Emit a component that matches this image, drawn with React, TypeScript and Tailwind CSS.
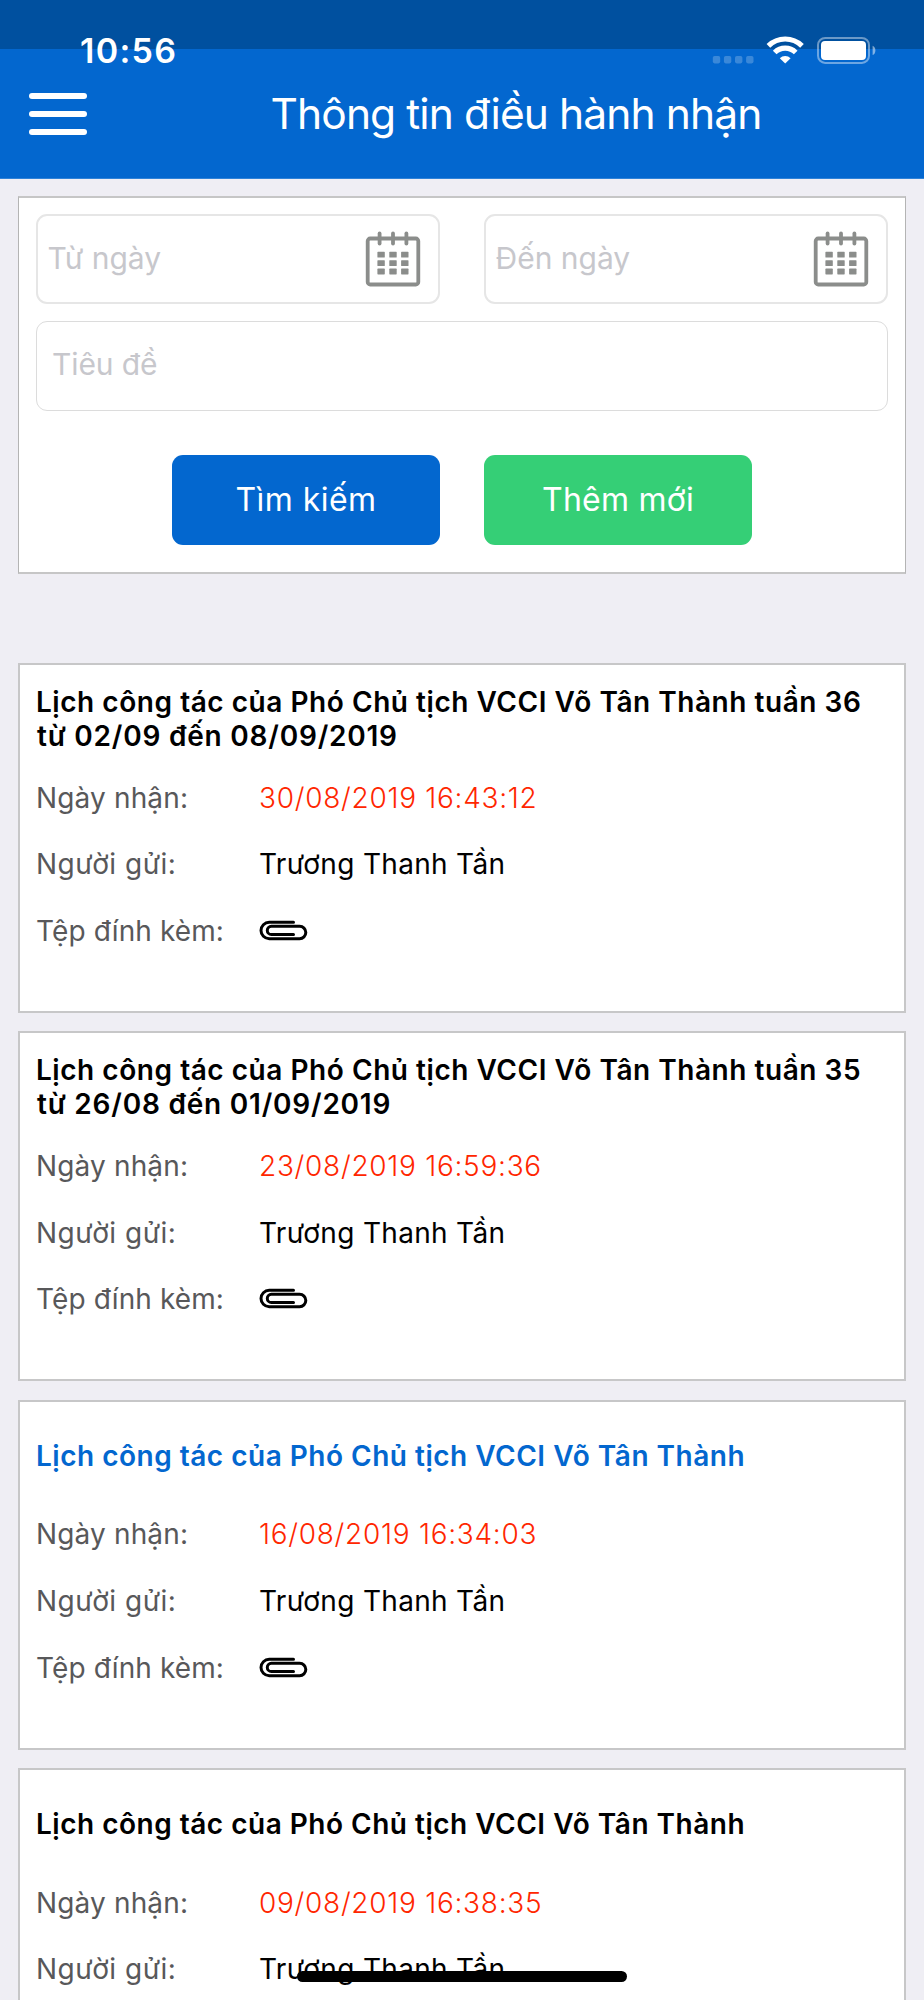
type Item = {
  title: string;
  titleEnd?: string;
  date: string;
  sender: string;
  active?: boolean;
  attachment?: boolean;
};

const items: Item[] = [
  {
    title: "Lịch công tác của Phó Chủ tịch VCCI Võ Tân Thành tuần 36",
    titleEnd: "từ 02/09 đến 08/09/2019",
    date: "30/08/2019 16:43:12",
    sender: "Trương Thanh Tần",
    attachment: true,
  },
  {
    title: "Lịch công tác của Phó Chủ tịch VCCI Võ Tân Thành tuần 35",
    titleEnd: "từ 26/08 đến 01/09/2019",
    date: "23/08/2019 16:59:36",
    sender: "Trương Thanh Tần",
    attachment: true,
  },
  {
    title: "Lịch công tác của Phó Chủ tịch VCCI Võ Tân Thành",
    date: "16/08/2019 16:34:03",
    sender: "Trương Thanh Tần",
    active: true,
    attachment: true,
  },
  {
    title: "Lịch công tác của Phó Chủ tịch VCCI Võ Tân Thành",
    date: "09/08/2019 16:38:35",
    sender: "Trương Thanh Tần",
  },
];

function CalendarIcon() {
  return (
    <svg width="56" height="56" viewBox="0 0 56 56" className="shrink-0">
      <rect x="2.7" y="7.5" width="50.6" height="46" rx="2.5" fill="none" stroke="#8b8d8b" strokeWidth="3.8" />
      {[14.6, 28, 41.4].map((x) => (
        <line key={x} x1={x} x2={x} y1="2.4" y2="12.6" stroke="#8b8d8b" strokeWidth="3.8" strokeLinecap="round" />
      ))}
      {[20.8, 29.2, 37.6].map((y) =>
        [12.4, 24.3, 36.1].map((x) => (
          <rect key={`${x}-${y}`} x={x} y={y} width="7.4" height="5.8" rx="0.6" fill="#8b8d8b" />
        )),
      )}
    </svg>
  );
}

function ClipIcon() {
  return (
    <svg width="50" height="22" viewBox="0 0 50 22" fill="none" stroke="#000" strokeWidth="3" strokeLinecap="round">
      <path d="M34.5 2.3H10.2a8.2 8.2 0 0 0 0 16.4H40.6a6.2 6.2 0 0 0 0-12.4H12.4a4 4 0 0 0 0 8.2H34.5" />
    </svg>
  );
}

function StatusBar() {
  return (
    <div className="flex h-[77px] items-start justify-between bg-[linear-gradient(#00509f_49px,#0367cf_49px)] pl-[80px] pr-[46px]">
      <span className="mt-[31px] text-[34px] font-semibold leading-[40px] tracking-[1.3px] text-white">10:56</span>
      <svg width="166" height="32" viewBox="0 0 166 32" className="mt-[34px]">
        {[0.8, 11.9, 23, 34.1].map((x) => (
          <rect key={x} x={x} y="22" width="7.4" height="7.4" rx="1.8" fill="#fff" fillOpacity="0.22" />
        ))}
        <g fill="none" stroke="#fff" strokeWidth="5.2">
          <path d="M56.4 11.8a24.2 24.2 0 0 1 33.6 0" />
          <path d="M62.7 18.5a15 15 0 0 1 21 0" />
        </g>
        <path d="M67.8 24.3a7.7 7.7 0 0 1 10.8 0L73.2 29.5z" fill="#fff" />
        <rect x="106" y="3.9" width="51" height="25" rx="7.2" fill="none" stroke="#fff" strokeOpacity="0.42" strokeWidth="2" />
        <rect x="109" y="7" width="45" height="18.9" rx="4" fill="#fff" />
        <path d="M160.6 11.8c1.7.6 2.8 2.4 2.8 4.6s-1.1 4-2.8 4.6z" fill="#fff" fillOpacity="0.5" />
      </svg>
    </div>
  );
}

function Header() {
  return (
    <header className="shrink-0 border-b border-[#2f82d8] bg-[#0367cf]">
      <StatusBar />
      <div className="flex h-[101px] items-start pl-[29px] text-white">
        <button aria-label="Menu" className="mt-4 flex w-[58px] flex-col gap-3">
          <span className="h-1.5 rounded-full bg-white" />
          <span className="h-1.5 rounded-full bg-white" />
          <span className="h-1.5 rounded-full bg-white" />
        </button>
        <h1 className="ml-[21px] mt-[9px] flex-1 whitespace-nowrap text-center text-[42.5px] leading-[56px] tracking-[-0.9px]">
          Thông tin điều hành nhận
        </h1>
      </div>
    </header>
  );
}

function DateField({ label }: { label: string }) {
  return (
    <div className="flex h-[90px] w-[404px] items-center justify-between rounded-[11px] border-2 border-[#e6e6e6] pl-[9.5px] pr-[17px]">
      <span className="pb-[2px] text-[30px] text-[#c7c7cc]">{label}</span>
      <CalendarIcon />
    </div>
  );
}

function SearchPanel() {
  return (
    <section className="mx-[18px] mt-[17px] h-[378px] shrink-0 border-x border-y-2 border-x-[#b4b4b4] border-y-[#c6c6c6] bg-white px-[17px] pt-4">
      <div className="flex justify-between">
        <DateField label="Từ ngày" />
        <DateField label="Đến ngày" />
      </div>
      <div className="mt-[17px] flex h-[90px] items-center rounded-[11px] border border-[#dcdcdc] pb-[3px] pl-[15px] text-[30px] tracking-[-0.1px] text-[#c7c7cc]">
        Tiêu đề
      </div>
      <div className="mt-11 flex justify-center gap-11 text-[32px] text-white">
        <button className="h-[90px] w-[268px] rounded-[11px] bg-[#0367cf] tracking-[0.44px]">Tìm kiếm</button>
        <button className="h-[90px] w-[268px] rounded-[11px] bg-[#35cf76] tracking-[0.23px]">Thêm mới</button>
      </div>
    </section>
  );
}

function Card({ item }: { item: Item }) {
  return (
    <article className="h-[350px] shrink-0 border-2 border-[#c7c7c8] bg-white pl-[16px] pt-[8.5px] text-[28px] leading-[34px]">
      <h2
        className={`flex h-[91px] flex-col justify-center whitespace-nowrap font-semibold ${
          item.active ? "text-[#0367cf]" : "text-black"
        }`}
      >
        <span className={item.titleEnd ? "tracking-[0.54px]" : "tracking-[0.5px]"}>{item.title}</span>
        {item.titleEnd && <span className="pl-[1px] tracking-[0.78px]">{item.titleEnd}</span>}
      </h2>
      <dl className="grid auto-rows-[66.6px] grid-cols-[223px_1fr] items-center">
        <dt className="tracking-[0.15px] text-[#58585a]">Ngày nhận:</dt>
        <dd className="font-light tracking-[0.72px] text-[#ff2600]">{item.date}</dd>
        <dt className="tracking-[0.5px] text-[#58585a]">Người gửi:</dt>
        <dd className="tracking-[0.31px] text-black">{item.sender}</dd>
        {item.attachment && (
          <>
            <dt className="tracking-[0.1px] text-[#58585a]">Tệp đính kèm:</dt>
            <dd>
              <ClipIcon />
            </dd>
          </>
        )}
      </dl>
    </article>
  );
}

export default function App() {
  return (
    <div className="relative flex h-[2000px] w-[924px] flex-col overflow-hidden bg-[#efeef4] font-['Inter','Noto_Sans',sans-serif]">
      <Header />
      <SearchPanel />
      <main className="mx-[18px] mt-[89px] flex flex-col gap-[18.3px]">
        {items.map((item) => (
          <Card key={item.date} item={item} />
        ))}
      </main>
      <div className="absolute bottom-[18px] left-[297px] h-[11px] w-[330px] rounded-full bg-black" />
    </div>
  );
}
